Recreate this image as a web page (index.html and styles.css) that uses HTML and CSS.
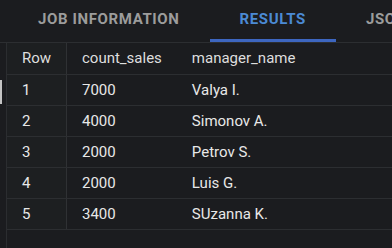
FILE: index.html
```html
<!DOCTYPE html>
<html lang="en">

<head>
    <meta charset="utf-8">
    <meta name="viewport" content="width=device-width, initial-scale=1.0">
    <title>Results</title>

    <link rel="stylesheet" href="styles.css">
</head>

<body>
    <nav class="tabs">
        <div class="tab">Job information</div>
        <div class="tab valgt">Results</div>
        <div class="tab">JSON</div>
    </nav>

    <main class="panel">
        <div class="gutter">
            <span class="marker"></span>
        </div>
        <table class="results">
            <thead>
                <tr>
                    <th class="rownum">Row</th>
                    <th class="sales">count_sales</th>
                    <th>manager_name</th>
                </tr>
            </thead>
            <tbody>
                <tr>
                    <td class="rownum">1</td>
                    <td class="sales">7000</td>
                    <td>Valya I.</td>
                </tr>
                <tr>
                    <td class="rownum">2</td>
                    <td class="sales">4000</td>
                    <td>Simonov A.</td>
                </tr>
                <tr>
                    <td class="rownum">3</td>
                    <td class="sales">2000</td>
                    <td>Petrov S.</td>
                </tr>
                <tr>
                    <td class="rownum">4</td>
                    <td class="sales">2000</td>
                    <td>Luis G.</td>
                </tr>
                <tr>
                    <td class="rownum">5</td>
                    <td class="sales">3400</td>
                    <td>SUzanna K.</td>
                </tr>
            </tbody>
        </table>
    </main>
</body>

</html>
```

FILE: styles.css
```css
* {
    box-sizing: border-box;
}

html,
body {
    margin: 0;
    height: 100%;
    background-color: #1b1c1f;
    font-family: Roboto, "Liberation Sans", sans-serif;
    overflow: hidden;
}

body {
    display: flex;
    flex-direction: column;
}

.tabs {
    display: flex;
    height: 43px;
    padding-left: 8px;
    border-bottom: 1px solid #2c2e31;
    white-space: nowrap;
    overflow: hidden;
}

.tab {
    flex-shrink: 0;
    padding: 0 30px;
    line-height: 39px;
    height: 42px;
    font-size: 15px;
    font-weight: bold;
    letter-spacing: 0.62px;
    text-transform: uppercase;
    color: #9c9c9c;
    border-bottom: 3px solid transparent;
}

.valgt {
    color: #4b8ad4;
    border-bottom-color: #3d66c0;
}

.panel {
    flex: 1;
    display: flex;
}

.gutter {
    position: relative;
    width: 7px;
    border-right: 1px solid #2b2d30;
}

.marker {
    position: absolute;
    left: 0;
    top: 37px;
    width: 2px;
    height: 24px;
    background-color: #c4c4c4;
}

.results {
    border-collapse: collapse;
    width: 100%;
    height: 0;
    font-size: 15px;
    color: #e8e8e8;
}

.results th,
.results td {
    height: 31px;
    padding: 0 15px;
    text-align: left;
    font-weight: normal;
    border-bottom: 1px solid #2c2e31;
    white-space: nowrap;
}

.results th {
    color: #dedede;
}

.rownum {
    width: 59px;
    background-color: #1d1f21;
    border-right: 1px solid #2f3134;
}

.sales {
    width: 110px;
}
```
